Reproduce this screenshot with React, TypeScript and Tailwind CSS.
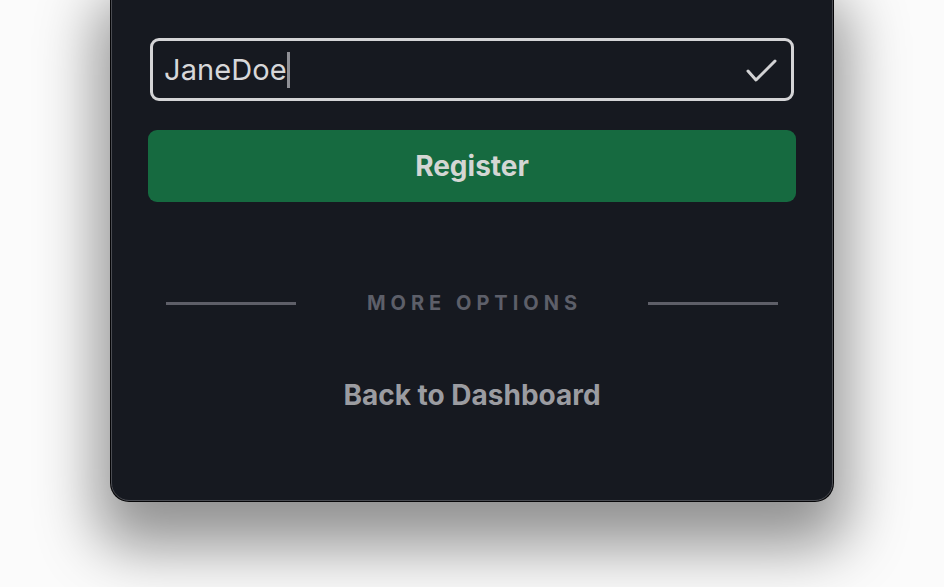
export default function App() {
    return (
        <div className="min-h-[587px] w-full bg-[#fbfbfb] flex justify-center overflow-hidden" style={{ fontFamily: "Inter, 'Noto Sans', sans-serif" }}>
            <div className="w-[722px] h-[522px] -mt-[21px] rounded-[18px] bg-[#161920] border border-[#4a4c52] shadow-[0_0_0_1px_#050507,0_32px_60px_14px_rgba(0,0,0,0.42)] pt-[58px] px-[36px] flex flex-col">
                <div className="mx-[2px] h-[63px] rounded-[9px] border-[3px] border-[#d4d4d6] flex items-center justify-between pl-[11px] pr-[14px]">
                    <div className="flex items-center">
                        <span className="text-[29px] text-[#d7d7d9] leading-none tracking-[0.1px]">JaneDoe</span>
                        <span className="w-[3px] h-[36px] bg-[#8f9096]" />
                    </div>
                    <svg width="32" height="24" viewBox="0 0 32 24" fill="none">
                        <path d="M3 13 L11 22 L30 3" stroke="#d2d2d4" strokeWidth="3" strokeLinecap="round" strokeLinejoin="round" />
                    </svg>
                </div>

                <button className="mt-[29px] h-[72px] rounded-[9px] bg-[#166a40] text-[28px] font-bold text-[#d4d6d4]">
                    Register
                </button>

                <div className="mt-[86px] px-[18px] flex items-center justify-between">
                    <div className="w-[130px] h-[3px] bg-[#5e5f68]" />
                    <span className="text-[20px] font-bold tracking-[5px] text-[#5d5f69] pl-[5px]">MORE OPTIONS</span>
                    <div className="w-[130px] h-[3px] bg-[#5e5f68]" />
                </div>

                <div className="mt-[56px] text-center text-[28px] font-bold text-[#9b9ca1]">
                    Back to Dashboard
                </div>
            </div>
        </div>
    )
}
